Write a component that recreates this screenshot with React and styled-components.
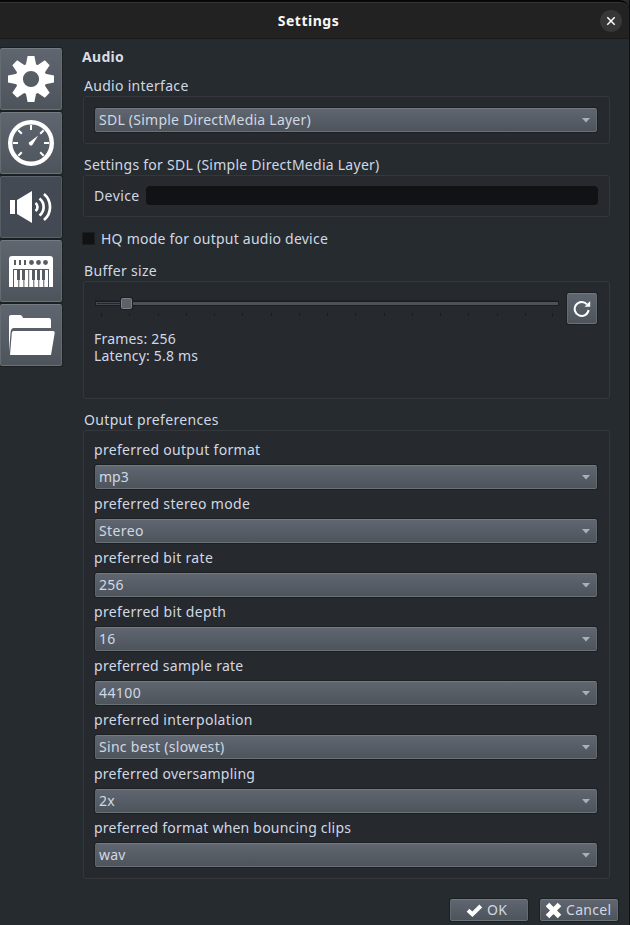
import React from "react";
import styled, { createGlobalStyle } from "styled-components";

const Global = createGlobalStyle`
  * { box-sizing: border-box; }
  body { margin: 0; background: #262b2f; }
`;

const Window = styled.div`
  position: relative;
  width: 630px;
  height: 925px;
  overflow: hidden;
  display: flex;
  flex-direction: column;
  background: #262b2f;
  color: #d1d8e4;
  font-family: "Noto Sans", "Open Sans", sans-serif;
  font-size: 14px;
  line-height: 18px;
  border-right: 1px solid #0e1114;
`;

const TitleBar = styled.header`
  flex: none;
  height: 39px;
  display: grid;
  grid-template-columns: 1fr auto 1fr;
  align-items: center;
  padding: 1px 7px 0 0;
  background: #222222;
  border-top: 2px solid #060908;
  border-bottom: 1px solid #191a1a;
  border-top-right-radius: 9px;
  box-shadow: inset 0 1px 0 #343434;
`;

const Title = styled.h1`
  grid-column: 2;
  margin: 0 0 0 -5px;
  font-size: 14px;
  font-weight: 700;
  color: #f7f7f7;
  letter-spacing: 0.5px;
`;

const CloseButton = styled.button`
  justify-self: end;
  width: 22px;
  height: 22px;
  padding: 0;
  border: 0;
  border-radius: 50%;
  background: #373737;
  display: grid;
  place-items: center;
`;

const Body = styled.div`
  flex: 1;
  display: flex;
`;

const Sidebar = styled.nav`
  width: 83px;
  padding-top: 9px;
  display: flex;
  flex-direction: column;
  gap: 2px;
`;

const Tab = styled.button`
  width: 62px;
  height: 62px;
  padding: 0;
  border: 1px solid;
  border-color: #737a80 #646c72 #6b7277 #646c72;
  border-radius: 2px;
  background: ${(p) => (p.$active ? "#444a53" : "linear-gradient(#5f6670, #4d545b)")};
  ${(p) => p.$active && "border-color: #5b636a #555d63 #59616a;"}
  box-shadow: 0 0 0 1px #1c2023;
  display: grid;
  place-items: center;
  svg { display: block; }
`;

const Main = styled.main`
  width: 527px;
  display: flex;
  flex-direction: column;
`;

const Text = styled.span`
  display: block;
  white-space: pre;
  letter-spacing: ${(p) => p.$track || 0}px;
`;

const Heading = styled.h2`
  margin: 9px 0 0 -1px;
  font-size: 14px;
  line-height: 18px;
  font-weight: 700;
  letter-spacing: 0.3px;
  color: #d6dce6;
`;

const GroupTitle = styled(Text)`
  height: 19px;
  margin-top: ${(p) => p.$gap}px;
  padding-left: 1px;
`;

const Group = styled.section`
  height: ${(p) => p.$height}px;
  border: 1px solid #34383c;
  border-radius: 3px;
  background: #26292e;
  padding: ${(p) => p.$pad};
`;

const Combo = styled.div`
  height: 24px;
  width: 502px;
  padding: 0 6px 0 3px;
  display: flex;
  align-items: center;
  justify-content: space-between;
  border: 1px solid;
  border-color: #737a80 #636b71 #6b7277 #5d656b;
  border-radius: 2px;
  background: linear-gradient(#5f6670, #4d545b);
  box-shadow: 0 0 0 1px #1c2023;
`;

const DeviceRow = styled.div`
  display: flex;
  align-items: center;
`;

const DeviceLabel = styled(Text)`
  width: 52px;
`;

const DeviceField = styled.div`
  width: 452px;
  height: 19px;
  border-radius: 4px;
  background: #111214;
`;

const CheckRow = styled.label`
  height: 18px;
  margin-top: 13px;
  margin-left: -1px;
  display: flex;
  align-items: center;
  gap: 6px;
`;

const CheckBox = styled.span`
  width: 13px;
  height: 13px;
  margin-bottom: 2px;
  background: #111214;
  border: 1px solid #1b1d20;
`;

const SliderRow = styled.div`
  display: flex;
  gap: 8px;
`;

const RefreshButton = styled(Tab)`
  width: 30px;
  height: 31px;
`;

const Stats = styled(Text)`
  margin-top: 6px;
  margin-left: -1px;
  line-height: 17px;
`;

const Field = styled.div`
  height: 54px;
  display: flex;
  flex-direction: column;
  gap: 6px;
`;

const FieldLabel = styled(Text)`
  height: 18px;
  margin-left: -1px;
`;

const Footer = styled.footer`
  width: 535px;
  margin-top: 20px;
  display: flex;
  justify-content: flex-end;
  gap: 12px;
`;

const ActionButton = styled.button`
  height: 22px;
  width: 78px;
  padding: 0 0 0 ${(p) => p.$pad}px;
  display: flex;
  align-items: center;
  gap: 4px;
  border: 1px solid;
  border-color: #737a80 #646c72 #6b7277;
  border-radius: 2px;
  background: linear-gradient(#5f6670, #4d545b);
  box-shadow: 0 0 0 1px #1c2023;
  color: #d1d8e4;
  font: inherit;
`;

const Svg = ({ w, h = w, children }) => (
  <svg width={w} height={h} viewBox={`0 0 ${w} ${h}`} fill="#fff">{children}</svg>
);

const Gear = () => (
  <Svg w={60}>
    {[0, 45, 90, 135, 180, 225, 270, 315].map((a) => (
      <path key={a} d="M26.6 7h6.8l2 10h-10.8z" transform={`rotate(${a} 30 30)`} />
    ))}
    <circle cx="30" cy="30" r="11.8" fill="none" stroke="#fff" strokeWidth="7.4" />
  </Svg>
);

const Gauge = () => (
  <Svg w={60}>
    <circle cx="30" cy="30" r="20.8" fill="none" stroke="#fff" strokeWidth="4.4" />
    <path d="M30 12v5M12 30h5M43 30h5M17.3 17.3l3.5 3.5M42.7 17.3l-3.5 3.5M17.3 42.7l3.5-3.5M42.7 42.7l-3.5-3.5" stroke="#fff" strokeWidth="2" />
    <path d="M28.3 29.2L37.2 22.6 31.5 31.7a2 2 0 1 1-3.2-2.5z" />
  </Svg>
);

const Speaker = () => (
  <Svg w={60}>
    <path d="M9 23h5v14H9zM16 23L31 14v32L16 37z" />
    <g fill="none" stroke="#fff" strokeWidth="2.7">
      <path d="M34.5 26a5 5 0 0 1 0 8" />
      <path d="M38.5 21.5a10.8 10.8 0 0 1 0 17" />
      <path d="M43 17a17 17 0 0 1 0 26" />
    </g>
  </Svg>
);

const Keyboard = () => (
  <Svg w={60}>
    <path d="M11 15h38a3 3 0 0 1 3 3v28H8V18a3 3 0 0 1 3-3z" />
    <g fill="#555c64">
      <path d="M13 19h2v5h-2zM18 19h2v5h-2zM23 19h2v5h-2z" />
      <circle cx="30.5" cy="21.5" r="2.4" />
      <circle cx="37.5" cy="21.5" r="2.4" />
      <circle cx="44.5" cy="21.5" r="2.4" />
      <path d="M12 28h36v18h-1V29H13v17h-1z" />
      <path d="M16 29h3v10h-3zM21 29h3v10h-3zM31 29h3v10h-3zM36 29h3v10h-3zM41 29h3v10h-3z" />
      <path d="M17.3 38h1v8h-1zM22.4 38h1v8h-1zM27.2 29h1v17h-1zM32.3 38h1v8h-1zM37.3 38h1v8h-1zM42.3 38h1v8h-1z" />
    </g>
  </Svg>
);

const Folder = () => (
  <Svg w={60}>
    <path d="M8 47V12q0-2 2-2h9q2 0 2.6 2l.4 1h26q2 0 2 2v8H13q-3 0-3.4 4z" />
    <path d="M12.5 26H52q2 0 1.7 2L50 50H9l1.8-22q.2-2 1.7-2z" />
  </Svg>
);

const tabs = [
  { id: "general", Icon: Gear },
  { id: "performance", Icon: Gauge },
  { id: "audio", Icon: Speaker, active: true },
  { id: "midi", Icon: Keyboard },
  { id: "paths", Icon: Folder },
];

const preferences = [
  ["preferred output format", "mp3", 0.31, 0],
  ["preferred stereo mode", "Stereo", 0.32, 0.4],
  ["preferred bit rate", "256", 0.32, 0.2],
  ["preferred bit depth", "16", 0.34, 0.2],
  ["preferred sample rate", "44100", 0.27, 0.4],
  ["preferred interpolation", "Sinc best (slowest)", 0.32, 0.3],
  ["preferred oversampling", "2x", 0.24, 0.2],
  ["preferred format when bouncing clips", "wav", 0.21, 0.2],
];

const ticks = Array.from({ length: 17 }, (_, i) => Math.round(6 + i * 28.25));

const Slider = () => (
  <Svg w={464} h={31}>
    <rect x="0" y="7.5" width="464" height="5.5" rx="1" fill="#1c1f22" />
    <rect x="1" y="9" width="30" height="3" fill="#42484d" />
    <rect x="2" y="10" width="28" height="1" fill="#24282b" />
    <rect x="36" y="9" width="427" height="3" fill="#4b5359" />
    <rect x="25" y="4" width="13" height="13" rx="2" fill="#1c1f22" />
    <rect x="26.5" y="5.5" width="10" height="10" rx="1" fill="#5b626b" stroke="#7b8389" />
    {ticks.map((x) => (
      <rect key={x} x={Math.min(x, 457)} y="20" width="1" height={x === 6 || x > 450 ? 4 : 3} fill="#1a1c1f" />
    ))}
  </Svg>
);

const Select = ({ value, track }) => (
  <Combo>
    <Text $track={track}>{value}</Text>
    <svg width="8" height="5" viewBox="0 0 8 5"><path d="M0 0h8L4 4.5z" fill="#aab0bb" /></svg>
  </Combo>
);

export default function App() {
  return (
    <Window>
      <Global />
      <TitleBar>
        <Title>Settings</Title>
        <CloseButton aria-label="Close">
          <svg width="10" height="10" viewBox="0 0 10 10"><path d="M1.3 1.3l7.4 7.4M8.7 1.3L1.3 8.7" stroke="#fff" strokeWidth="1.5" /></svg>
        </CloseButton>
      </TitleBar>
      <Body>
        <Sidebar>
          {tabs.map(({ id, Icon, active }) => (
            <Tab key={id} $active={active} aria-label={id}><Icon /></Tab>
          ))}
        </Sidebar>
        <Main>
          <Heading>Audio</Heading>
          <GroupTitle $gap={11} $track={0.29}>Audio interface</GroupTitle>
          <Group $height={48} $pad="11px">
            <Select value="SDL (Simple DirectMedia Layer)" track={0.24} />
          </Group>
          <GroupTitle $gap={12} $track={0.26}>Settings for SDL (Simple DirectMedia Layer)</GroupTitle>
          <Group $height={42} $pad="10px">
            <DeviceRow>
              <DeviceLabel $track={0.4}>Device</DeviceLabel>
              <DeviceField />
            </DeviceRow>
          </Group>
          <CheckRow>
            <CheckBox />
            <Text $track={0.23}>HQ mode for output audio device</Text>
          </CheckRow>
          <GroupTitle $gap={14} $track={0.32}>Buffer size</GroupTitle>
          <Group $height={118} $pad="11px">
            <SliderRow>
              <Slider />
              <RefreshButton aria-label="Refresh">
                <svg width="18" height="18" viewBox="0 0 18 18">
                  <path d="M14 4.4A7 7 0 1 0 15.6 10" fill="none" stroke="#fff" strokeWidth="2" />
                  <path d="M17.2 1v5.8h-5.6z" fill="#fff" />
                </svg>
              </RefreshButton>
            </SliderRow>
            <Stats $track={0.2}>{"Frames: 256\nLatency: 5.8 ms"}</Stats>
          </Group>
          <GroupTitle $gap={12} $track={0.34}>Output preferences</GroupTitle>
          <Group $height={449} $pad="10px 11px">
            {preferences.map(([label, value, lt, vt]) => (
              <Field key={label}>
                <FieldLabel $track={lt}>{label}</FieldLabel>
                <Select value={value} track={vt} />
              </Field>
            ))}
          </Group>
          <Footer>
            <ActionButton $pad={15}>
              <svg width="17" height="14" viewBox="0 0 17 14"><path d="M2 7.2l4.4 4L14.8 3" fill="none" stroke="#fff" strokeWidth="4" /></svg>
              <Text $track={0.2}>OK</Text>
            </ActionButton>
            <ActionButton $pad={4}>
              <svg width="17" height="17" viewBox="0 0 17 17"><path d="M2.5 2.5l12 12M14.5 2.5l-12 12" stroke="#fff" strokeWidth="5" /></svg>
              <Text $track={0.3}>Cancel</Text>
            </ActionButton>
          </Footer>
        </Main>
      </Body>
    </Window>
  );
}
